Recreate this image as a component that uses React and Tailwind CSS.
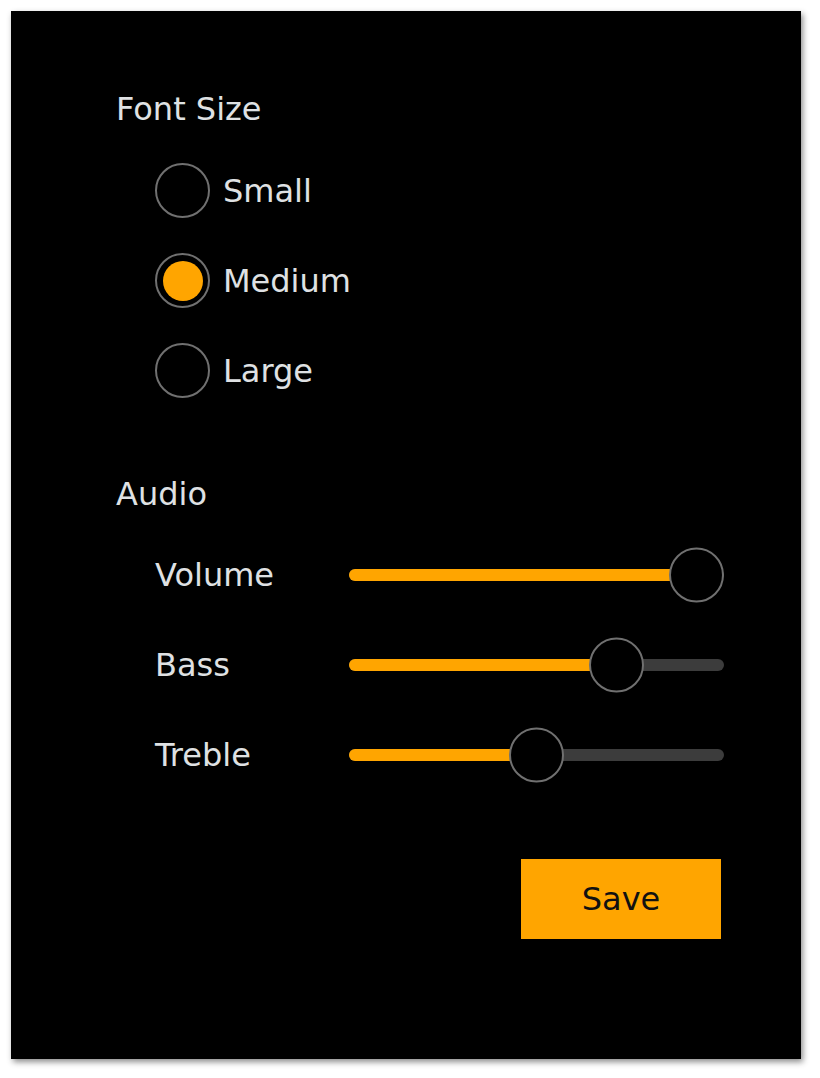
export default function App() {
    const sizes = ['Small', 'Medium', 'Large'];
    const selected = 'Medium';
    const sliders = [
        { name: 'Volume', value: 1 },
        { name: 'Bass', value: 0.75 },
        { name: 'Treble', value: 0.5 },
    ];

    return (
        <div className="min-h-screen bg-white p-[11px] font-['DejaVu_Sans',sans-serif]">
            <div className="h-[1048px] w-[790px] bg-black shadow-[2px_3px_6px_rgba(0,0,0,0.45)] pl-[105px] pr-[80px] pt-[78px] text-[32px] text-[#dfe1e3]">
                {/* Font size */}
                <div className="h-10 leading-10">Font Size</div>
                <div className="mt-[34px] flex flex-col gap-[35px] pl-[39px]">
                    {sizes.map((s) => (
                        <div key={s} className="flex h-[55px] items-center gap-[13px]">
                            <div className="flex h-[55px] w-[55px] items-center justify-center rounded-full border-2 border-[#707070]">
                                {s === selected && <div className="h-10 w-10 rounded-full bg-[#ffa500]" />}
                            </div>
                            <span className="leading-10">{s}</span>
                        </div>
                    ))}
                </div>

                {/* Audio */}
                <div className="mt-[76px] h-10 leading-10">Audio</div>
                <div className="mt-[33px] flex flex-col gap-[35px] pl-[39px]">
                    {sliders.map((sl) => (
                        <div key={sl.name} className="flex h-[55px] items-center">
                            <span className="w-[194px] leading-10">{sl.name}</span>
                            <div className="relative h-[12px] w-[375px] -mr-[3px] rounded-full bg-[#3c3c3c]">
                                <div
                                    className="absolute left-0 top-0 h-full rounded-l-full bg-[#ffa500]"
                                    style={{ width: 27.5 + sl.value * 320 }}
                                />
                                <div
                                    className="absolute top-1/2 h-[55px] w-[55px] -translate-y-1/2 rounded-full border-2 border-[#707070] bg-black"
                                    style={{ left: sl.value * 320 }}
                                />
                            </div>
                        </div>
                    ))}
                </div>

                <div className="mt-[77px] flex justify-end">
                    <button className="h-20 w-[200px] bg-[#ffa500] text-[32px] text-[#111]">Save</button>
                </div>
            </div>
        </div>
    );
}
